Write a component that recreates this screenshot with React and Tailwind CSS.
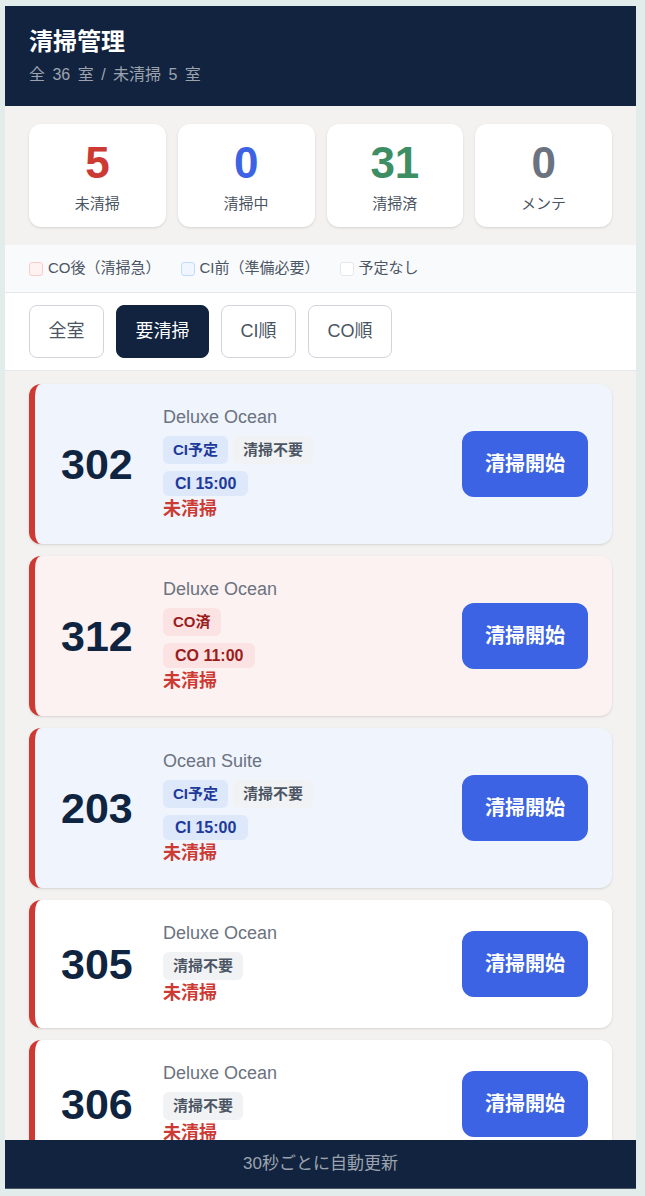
import React, { useState } from "react";

const stats = [
  { value: 5, label: "未清掃", color: "text-[#cc3a33]" },
  { value: 0, label: "清掃中", color: "text-[#3b63e3]" },
  { value: 31, label: "清掃済", color: "text-[#3d8f63]" },
  { value: 0, label: "メンテ", color: "text-[#6b7280]" },
];

const rooms = [
  { no: "302", type: "Deluxe Ocean", kind: "ci", tags: ["CI予定", "清掃不要"], time: "CI 15:00" },
  { no: "312", type: "Deluxe Ocean", kind: "co", tags: ["CO済"], time: "CO 11:00" },
  { no: "203", type: "Ocean Suite", kind: "ci", tags: ["CI予定", "清掃不要"], time: "CI 15:00" },
  { no: "305", type: "Deluxe Ocean", kind: "none", tags: ["清掃不要"] },
  { no: "306", type: "Deluxe Ocean", kind: "none", tags: ["清掃不要"] },
];

const cardBg = {
  ci: "bg-[#eff4fd]",
  co: "bg-[#fcf2f2]",
  none: "bg-white",
};

const tagStyle = (tag) => {
  if (tag === "CI予定") return "bg-[#dde8fb] text-[#1e3a9a]";
  if (tag === "CO済") return "bg-[#fbe3e3] text-[#9b1c1c]";
  return "bg-[#f1f2f4] text-[#4b5563]";
};

const StatCard = ({ value, label, color }) => (
  <div className="flex h-[103px] flex-col items-center rounded-xl bg-white pt-[17px] shadow-sm">
    <div className={`text-[44px] font-bold leading-[44px] ${color}`}>{value}</div>
    <div className="mt-[9px] text-[15px] leading-5 text-[#4b5563]">{label}</div>
  </div>
);

const RoomCard = ({ room }) => (
  <div
    className={`flex items-center rounded-xl border-l-[6px] border-[#cc3a33] py-[22px] pl-[26px] pr-6 shadow-sm ${cardBg[room.kind]}`}
  >
    <div className="w-[102px] shrink-0 text-[43px] font-bold leading-none text-[#0f2440]">{room.no}</div>
    <div className="flex min-w-0 flex-1 flex-col">
      <div className="text-[18px] leading-[22px] text-[#6b7280]">{room.type}</div>
      <div className="mt-2 flex gap-[5px]">
        {room.tags.map((t) => (
          <span key={t} className={`rounded-md px-[10px] py-1 text-[15px] font-bold leading-5 ${tagStyle(t)}`}>
            {t}
          </span>
        ))}
      </div>
      {room.time && (
        <div className="mt-[7px] flex">
          <span
            className={`rounded-md px-[12px] py-[2px] text-[16px] font-bold leading-[21px] ${
              room.kind === "ci" ? "bg-[#dde8fb] text-[#1e3a9a]" : "bg-[#fbe3e3] text-[#9b1c1c]"
            }`}
          >
            {room.time}
          </span>
        </div>
      )}
      <div className="text-[18px] font-bold leading-[26px] text-[#cc3a33]">未清掃</div>
    </div>
    <button className="h-[66px] w-[126px] shrink-0 rounded-xl bg-[#3b63e3] text-[20px] font-bold text-white">
      清掃開始
    </button>
  </div>
);

export default function App() {
  const [filter, setFilter] = useState("要清掃");
  const filters = ["全室", "要清掃", "CI順", "CO順"];

  return (
    <div
      className="min-h-screen bg-[#e2ecea] pl-[5px] pt-[6px]"
      style={{ fontFamily: '"Liberation Sans", "Noto Sans CJK JP", sans-serif' }}
    >
      <div className="flex h-[1183px] w-[631px] flex-col overflow-hidden bg-[#f3f2f0]">
        {/* Header */}
        <div className="h-[100px] shrink-0 bg-[#11233e] px-6 pt-5">
          <h1 className="text-[24px] font-bold leading-8 text-white">清掃管理</h1>
          <p className="mt-[5px] text-[16px] leading-6 text-[#9ca3af] [word-spacing:3px]">全 36 室 / 未清掃 5 室</p>
        </div>

        {/* Stats */}
        <div className="grid shrink-0 grid-cols-4 gap-3 px-6 py-[18px]">
          {stats.map((s) => (
            <StatCard key={s.label} {...s} />
          ))}
        </div>

        {/* Legend */}
        <div className="flex h-[48px] shrink-0 items-center gap-5 border-b border-[#e5e7eb] bg-[#f8fafc] px-6 text-[15px] text-[#4b5563]">
          <div className="flex items-center gap-[5px]">
            <span className="h-[14px] w-[14px] rounded-[3px] border border-[#fecaca] bg-[#fef2f2]" />
            CO後（清掃急）
          </div>
          <div className="flex items-center gap-[5px]">
            <span className="h-[14px] w-[14px] rounded-[3px] border border-[#bfdbfe] bg-[#eff6ff]" />
            CI前（準備必要）
          </div>
          <div className="flex items-center gap-[5px]">
            <span className="h-[14px] w-[14px] rounded-[3px] border border-[#e5e7eb] bg-white" />
            予定なし
          </div>
        </div>

        {/* Filters */}
        <div className="flex shrink-0 gap-3 border-b border-[#e5e7eb] bg-white px-6 py-3">
          {filters.map((f) => (
            <button
              key={f}
              onClick={() => setFilter(f)}
              className={`h-[53px] rounded-lg px-[18.5px] text-[18px] ${
                filter === f
                  ? "border border-[#11233e] bg-[#11233e] text-white"
                  : "border border-[#d1d5db] bg-white text-[#4b5563]"
              }`}
            >
              {f}
            </button>
          ))}
        </div>

        {/* Room list */}
        <div className="flex min-h-0 flex-1 flex-col gap-3 overflow-hidden px-6 pt-[13px]">
          {rooms.map((r) => (
            <RoomCard key={r.no} room={r} />
          ))}
        </div>

        {/* Footer */}
        <div className="flex h-[49px] shrink-0 items-center justify-center border-b border-[#4b5563] bg-[#11233e] text-[17px] text-[#9ca3af]">
          30秒ごとに自動更新
        </div>
      </div>
    </div>
  );
}
